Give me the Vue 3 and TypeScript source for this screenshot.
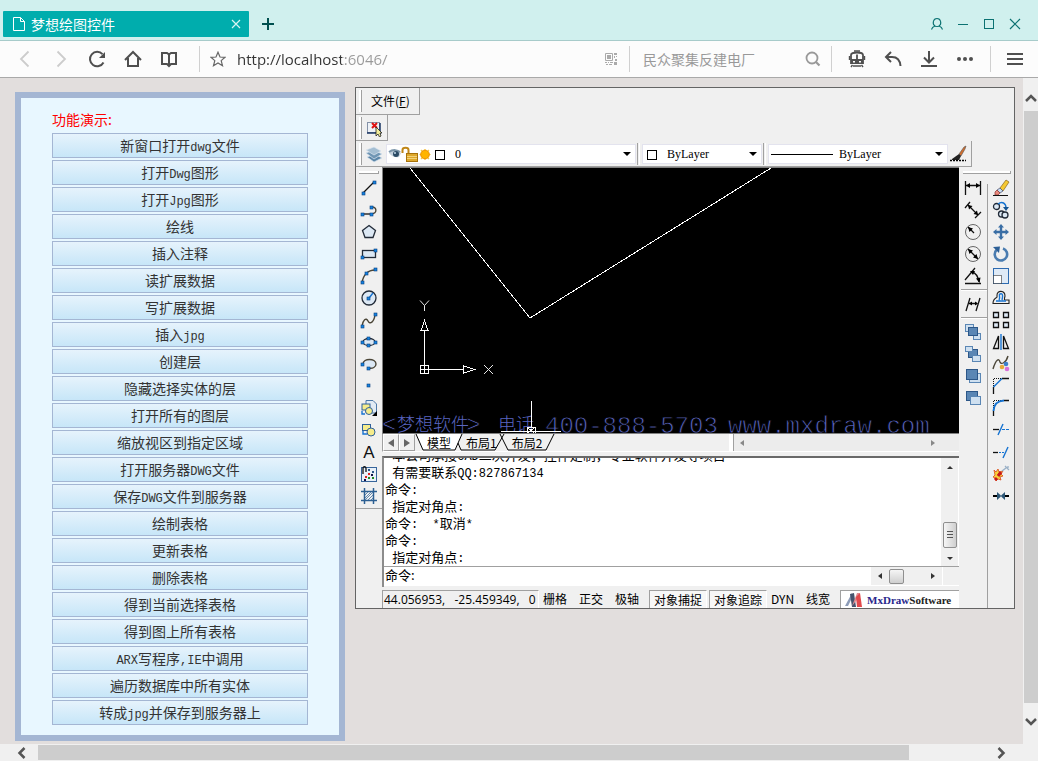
<script setup lang="ts">
import { ref } from 'vue'

interface Tool {
  label: string
  art: string
}

const url = ref('http://localhost:6046/')
const keyword = ref('')
const command = ref('命令:')

const actions: string[] = [
  '新窗口打开dwg文件', '打开Dwg图形', '打开Jpg图形', '绘线', '插入注释', '读扩展数据',
  '写扩展数据', '插入jpg', '创建层', '隐藏选择实体的层', '打开所有的图层', '缩放视区到指定区域',
  '打开服务器DWG文件', '保存DWG文件到服务器', '绘制表格', '更新表格', '删除表格',
  '得到当前选择表格', '得到图上所有表格', 'ARX写程序,IE中调用', '遍历数据库中所有实体',
  '转成jpg并保存到服务器上',
]

const history: string[] = [
  ' 本公司承接CAD二次开发，控件定制，专业软件开发等项目',
  ' 有需要联系QQ:827867134',
  '命令:',
  ' 指定对角点:',
  '命令:  *取消*',
  '命令:',
  ' 指定对角点:',
]

// Splits mixed text so that half-width runs can take their own face.
const runs = (text: string) =>
  (text.match(/[\x20-\x7e]+|[^\x20-\x7e]+/g) ?? []).map((part) => ({
    part,
    half: /^[\x20-\x7e]/.test(part),
  }))

const node = (x: number, y: number) =>
  `<rect x="${x - 1}" y="${y - 1}" width="3" height="3" fill="#1583e0" stroke="#0a3f7c" stroke-width=".6"/>`
const ink = 'fill="none" stroke="#111" stroke-width="1.3"'
const brown = 'fill="none" stroke="#4b4638" stroke-width="1.4"'
const pale = 'fill="#dce8f4" stroke="#222b38" stroke-width="1.3"'
const blue = 'fill="none" stroke="#1673d1" stroke-width="1.4"'
const steel = 'fill="#5a86b4" stroke="#2c5788" stroke-width="1"'
const glass = 'fill="#cfe0f0" stroke="#5a86b4" stroke-width="1"'

const drawTools: Tool[] = [
  { label: '直线', art: `<path d="M3 14L14 3" ${ink}/>${node(3, 14)}${node(14, 3)}` },
  { label: '多段线', art: `<path d="M2 13H11" ${ink}/><path d="M11 13C18 13 17 5 11 6" ${brown}/>${node(2, 13)}${node(11, 13)}${node(11, 6)}` },
  { label: '多边形', art: `<path d="M9 2.500L15.500 7.500L13 14.500H5L2.500 7.500Z" ${pale}/>` },
  { label: '矩形', art: `<rect x="2.500" y="5.500" width="13" height="7" ${pale}/>${node(2, 12)}${node(15, 5)}` },
  { label: '圆弧', art: `<path d="M2 16C3 8 8 3 15 3" ${brown}/>${node(2, 15)}${node(6, 6)}${node(15, 2)}` },
  { label: '圆', art: `<circle cx="9" cy="9" r="7" ${pale}/><path d="M9 9L13 4" ${blue}/>${node(8, 9)}` },
  { label: '样条曲线', art: `<path d="M2 15C3 9 6 6 8 10C10 14 14 11 15 4" ${brown}/>${node(2, 15)}${node(15, 3)}` },
  { label: '椭圆', art: `<ellipse cx="9" cy="9" rx="6" ry="3.500" ${pale}/>${node(2, 9)}${node(15, 9)}${node(8, 5)}${node(8, 12)}` },
  { label: '椭圆弧', art: `<path d="M3 9C3 3 16 3 16 9C16 12 13 14 8 13" fill="#dce8f4" stroke="#4b4638" stroke-width="1.400"/>${node(2, 9)}${node(8, 13)}` },
  { label: '点', art: node(8, 8) },
  { label: '创建块', art: `<path d="M6 1.500H13L16.500 5V14H6Z" fill="#e2ebf4" stroke="#4d79a8"/><rect x="2" y="5" width="8" height="6" fill="#f6ec8b" stroke="#2e609b"/><circle cx="9" cy="12" r="3.500" fill="#f6ec8b" stroke="#2e609b"/><path d="M2 12V15H5" ${blue}/><path d="M17 12V17H12Z" fill="#000"/>` },
  { label: '插入块', art: `<rect x="2.500" y="3.500" width="8" height="6" fill="#f6ec8b" stroke="#2e609b"/><circle cx="11" cy="11" r="4" fill="#f6ec8b" stroke="#2e609b"/><path d="M3 10V13H7" ${blue}/>` },
  { label: '文字', art: `<text x="9" y="15" font-family="Liberation Sans, sans-serif" font-size="17" text-anchor="middle" fill="#111">A</text>` },
  { label: '图案填充', art: `<rect x="1.500" y="2.500" width="15" height="14" fill="#e9f0f8" stroke="#37659b"/><path d="M3 9V3.500C3 1 6 1 6 3.500V7" ${ink}/><path d="M8 4h2v2h-2zM12 6h2v2h-2z" fill="#2c5788"/><path d="M5 11h2v2h-2zM8 8h2v2h-2z" fill="#d22"/><path d="M8 12h2v2h-2zM12 12h2v2h-2z" fill="#282"/><path d="M4 14h2v2h-2zM11 9h2v2h-2z" fill="#114"/>` },
  { label: '面域', art: `<path d="M4.500 1V17M13.500 1V17M1 4.500H17M1 13.500H17" fill="none" stroke="#2c5f92" stroke-width="1.500"/><path d="M5 8L8 5M5 11L11 5M5 13L13 5M8 13L13 8M11 13L13 11" stroke="#3f6f9f" stroke-width=".8"/>` },
]

const dimensionTools: Tool[] = [
  { label: '线性标注', art: `<path d="M1.500 2V16M16.500 2V16M2 6.500H16" ${ink}/><path d="M2 6.500L6 4V9ZM16 6.500L12 4V9Z"/>` },
  { label: '对齐标注', art: `<path d="M1 7L6 1M11 17L17 11M4 4L14 14" ${ink}/><path d="M4 4L8.500 5L5 8.500ZM14 14L13 9.500L9.500 13Z"/>` },
  { label: '半径标注', art: `<circle cx="9" cy="9" r="7.500" fill="none" stroke="#666"/><path d="M4 4L10 10" ${ink}/><path d="M4 4L9 5.500L5.500 9Z"/>` },
  { label: '直径标注', art: `<circle cx="9" cy="9" r="7.500" fill="none" stroke="#666"/><path d="M4 4L14 14" ${ink}/><path d="M4 4L9 5.500L5.500 9ZM14 14L9 12.500L12.500 9Z"/>` },
  { label: '角度标注', art: `<path d="M1 16.500H17M1 13L11 1M8 5C12 6 14 9 15 15" ${ink}/><path d="M15.500 16L12 11.500L16.500 10.500ZM6 4L11 4L9 8Z"/>` },
]
const obliqueTool: Tool = { label: '编辑标注', art: `<path d="M2 16L6 3M12 16L16 3M5 8.500H13" ${ink}/><path d="M5 8.500L8 6.500V10.500ZM14 8.500L11 6.500V10.500Z"/>` }
const orderTools: Tool[] = [
  { label: '前置', art: `<rect x="1.500" y="1.500" width="8" height="7" ${glass}/><rect x="9.500" y="10.500" width="7" height="6" ${glass}/><rect x="4.500" y="4.500" width="9" height="8" ${steel}/>` },
  { label: '后置', art: `<rect x="4.500" y="4.500" width="9" height="8" ${steel}/><rect x="1.500" y="1.500" width="7" height="5" ${glass}/><rect x="8.500" y="10.500" width="8" height="6" ${glass}/>` },
  { label: '置于对象之上', art: `<rect x="5.500" y="6.500" width="11" height="9" ${glass}/><rect x="2.500" y="2.500" width="11" height="10" ${steel}/>` },
  { label: '置于对象之下', art: `<rect x="2.500" y="2.500" width="11" height="9" ${steel}/><rect x="6.500" y="7.500" width="10" height="8" ${glass}/>` },
]

const modifyTools: Tool[] = [
  { label: '删除', art: `<path d="M8 9L14 1L17 3L11 12Z" fill="#f5c832" stroke="#86641c" stroke-width=".7"/><path d="M5 11L8 9L11 12L8 14Z" fill="#c6ddf0" stroke="#446" stroke-width=".7"/><path d="M3 13L5 11L8 14L6 16H3Z" fill="#e8897c" stroke="#833" stroke-width=".7"/><path d="M1 16.500H16" stroke="#111"/>` },
  { label: '复制', art: `<circle cx="4.500" cy="5.500" r="3" ${pale}/><circle cx="9.500" cy="13" r="3" ${pale}/><circle cx="13" cy="14" r="3" ${pale}/><path d="M6 3C10 0 14 2 14 7" ${blue}/><path d="M11 6H17L14 10Z" fill="#17548f"/>` },
  { label: '移动', art: `<path d="M9 1L12 4.500H10.200V7.800H13.500V6L17 9L13.500 12V10.200H10.200V13.500H12L9 17L6 13.500H7.800V10.200H4.500V12L1 9L4.500 6V7.800H7.800V4.500H6Z" fill="#3a6ea5"/>` },
  { label: '旋转', art: `<path d="M11 3.500A6.200 6.200 0 1 1 4.500 5" fill="none" stroke="#4a7cb0" stroke-width="2.600"/><path d="M1 2L8 1.500L7 8Z" fill="#2c5f96"/>` },
  { label: '缩放', art: `<rect x="1.500" y="1.500" width="15" height="15" fill="#dfeaf6" stroke="#2e6bb0"/><path d="M1.500 8.500H9.500V16.500H1.500Z" fill="#fff" stroke="#111" stroke-dasharray="1 1"/>` },
  { label: '偏移', art: `<path d="M1 14.500H17V11H13C12 11 12.500 9 13 7C13 1 5 1 5 6V8C5 9 1 9 1 14.500Z" fill="none" stroke="#222" stroke-width="1.100"/><path d="M4 12H14M7 11C9 8 6 6 8 5C11 4 11 7 10 11" ${blue}/>` },
  { label: '阵列', art: `<path d="M1.500 1.500h5v5h-5zM11.500 1.500h5v5h-5zM1.500 11.500h5v5h-5zM11.500 11.500h5v5h-5z" fill="#dfeaf6" stroke="#111" stroke-width="1.300"/>` },
  { label: '镜像', art: `<path d="M6.500 3V15.500H1.500ZM11.500 3V15.500H16.500Z" ${ink}/><path d="M9 1V17" ${blue}/>` },
  { label: '编辑样条', art: `<path d="M1 14C4 4 7 3 8 7C9 10 14 8 16 1" ${brown}/><circle cx="10" cy="12" r="2.300" fill="#e6aa39"/><circle cx="14" cy="9" r="2.300" fill="#3c80cc"/><circle cx="15" cy="14" r="2.300" fill="#d970d8"/>` },
  { label: '倒角', art: `<path d="M1.500 9V1.500H9" fill="none" stroke="#111" stroke-dasharray="1 1"/><path d="M1.500 17V10M10 1.500H17" ${ink}/><path d="M1.500 10L10 1.500" ${blue}/>` },
  { label: '圆角', art: `<path d="M1.500 9V1.500H9" fill="none" stroke="#111" stroke-dasharray="1 1"/><path d="M1.500 17V12M12 1.500H17" ${ink}/><path d="M1.500 12C2 5 5 2 12 1.500" fill="none" stroke="#1673d1" stroke-width="2"/>` },
  { label: '修剪', art: `<path d="M1 8.500H7" ${ink}/><path d="M6 14L11 3" ${blue}/><path d="M10 8.500H17" fill="none" stroke="#1673d1" stroke-width="1.200" stroke-dasharray="3 1"/>` },
  { label: '延伸', art: `<path d="M1 9.500H6" ${ink}/><path d="M11 15L16 4" ${blue}/><path d="M7 9.500H13" fill="none" stroke="#1673d1" stroke-width="1.200" stroke-dasharray="2 1"/>` },
  { label: '分解', art: `<path d="M2 5L4 7L6 4L7 7L11 6L9 9L11 11L8 12L9 15L6 14L4 16L3 13L1 12L3 10Z" fill="#f7d23a" stroke="#d9481c" stroke-width=".8"/><path d="M3 15L5 13M6 11L9 7" stroke="#c81818" stroke-width="3"/><path d="M10 6L14 3M13 1L17 5M16 1V3" stroke="#9ab0c6" stroke-width="1.300"/>` },
  { label: '打断', art: `<path d="M1 9H6M12 9H17" stroke="#000" stroke-width="2"/><path d="M5 5L9.500 9L5 13ZM13 5L8.500 9L13 13Z" fill="#2d5777"/>` },
]
</script>

<template>
  <div class="browser">
    <header class="titlebar">
      <div class="tab">
        <svg width="12" height="16" viewBox="0 0 12 16"><path d="M.5 1.500H7.500L11.500 5.500V14.500H.5ZM7.500 1.500V5.500H11.500" fill="none" stroke="#fff" /></svg>
        <span class="tab-name">梦想绘图控件</span>
        <button class="plain tab-close" aria-label="关闭标签">
          <svg width="10" height="10" viewBox="0 0 10 10"><path d="M1 1L9 9M9 1L1 9" stroke="#d9f4f3" stroke-width="1.200" /></svg>
        </button>
      </div>
      <button class="plain new-tab" aria-label="新标签">
        <svg width="12" height="12" viewBox="0 0 12 12"><path d="M6 0V12M0 6H12" stroke="#00504f" stroke-width="2" /></svg>
      </button>
      <div class="window-buttons">
        <button class="plain" aria-label="用户"><svg width="14" height="14" viewBox="0 0 14 14"><path d="M1.500 12.500C2 10.500 3.500 9.500 5 9C7 10 7 10 9 9C10.500 9.500 12 10.500 12.500 12.500M5 9C2 7 3 1.500 7 1.500S12 7 9 9" fill="none" stroke="#0b7272" stroke-width="1.100" /></svg></button>
        <button class="plain" aria-label="最小化"><svg width="12" height="12" viewBox="0 0 12 12"><path d="M1 6.500H11" stroke="#0b7272" /></svg></button>
        <button class="plain" aria-label="最大化"><svg width="12" height="12" viewBox="0 0 12 12"><rect x="1.500" y="1.500" width="9" height="9" fill="none" stroke="#0b7272" /></svg></button>
        <button class="plain" aria-label="关闭"><svg width="12" height="12" viewBox="0 0 12 12"><path d="M1 1L11 11M11 1L1 11" stroke="#0b7272" stroke-width="1.200" /></svg></button>
      </div>
    </header>

    <nav class="navbar">
      <button class="plain nav-button" aria-label="后退"><svg width="18" height="18" viewBox="0 0 18 18"><path d="M12.500 1.500L5 9L12.500 16.500" fill="none" stroke="#ccc" stroke-width="1.800" /></svg></button>
      <button class="plain nav-button" aria-label="前进"><svg width="18" height="18" viewBox="0 0 18 18"><path d="M5.500 1.500L13 9L5.500 16.500" fill="none" stroke="#ccc" stroke-width="1.800" /></svg></button>
      <button class="plain nav-button" aria-label="刷新"><svg width="18" height="18" viewBox="0 0 18 18"><path d="M15.500 12.500A7.200 7.200 0 1 1 14.500 4.200" fill="none" stroke="#4f4f4f" stroke-width="2" /><path d="M17 2V8H11Z" fill="#4f4f4f" /></svg></button>
      <button class="plain nav-button" aria-label="主页"><svg width="18" height="18" viewBox="0 0 18 18"><path d="M1 10L9 2L17 10M4 8V16H14V8" fill="none" stroke="#4f4f4f" stroke-width="2" /></svg></button>
      <button class="plain nav-button" aria-label="书签"><svg width="18" height="18" viewBox="0 0 18 18"><path d="M2 3H7L9 4.500L11 3H16V14H11L9 16L7 14H2ZM9 4V15" fill="none" stroke="#4f4f4f" stroke-width="2" /></svg></button>
      <div class="address">
        <button class="plain star" aria-label="收藏"><svg width="16" height="16" viewBox="0 0 16 16"><path d="M8 1.200L10 6L15 6.300L11.200 9.600L12.500 14.700L8 12L3.500 14.700L4.800 9.600L1 6.300L6 6Z" fill="none" stroke="#666" stroke-width="1.200" /></svg></button>
        <input v-model="url" class="url" type="text" aria-label="网址" />
        <button class="plain qr" aria-label="二维码"><svg width="12" height="12" viewBox="0 0 12 12"><path d="M.5 .5H7.500V7.500H.5Z" fill="none" stroke="#aaa" /><path d="M2 2h4v4H2zM9 0h3v2H9zM9 3h1v2H9zM11 3h1v1h-1zM10 6h2v2h-2zM0 9h2v1H0zM3 9h1v1H3zM5 9h3v1H5zM1 11h2v1H1zM4 11h3v1H4zM9 9h3v3H9z" fill="#aaa" /></svg></button>
      </div>
      <div class="search">
        <input v-model="keyword" type="text" placeholder="民众聚集反建电厂" aria-label="搜索" />
        <button class="plain" aria-label="搜索按钮"><svg width="16" height="16" viewBox="0 0 16 16"><circle cx="7" cy="7" r="5.500" fill="none" stroke="#999" stroke-width="1.800" /><path d="M11 11L14.500 14.500" stroke="#999" stroke-width="2.200" /></svg></button>
      </div>
      <div class="extras">
        <button class="plain nav-button" aria-label="抢票"><svg width="18" height="18" viewBox="0 0 18 18"><path d="M3 13V5C3 3 5 2.500 9 2.500S15 3 15 5V13ZM9 4.500V9" fill="none" stroke="#4f4f4f" stroke-width="1.800" /><path d="M1.500 6V10M16.500 6V10M6 1H12M4.500 15L3 17M13.500 15L15 17M5 16H13" fill="none" stroke="#4f4f4f" stroke-width="1.400" /><path d="M3 9H15V14H3Z" fill="#4f4f4f" /><path d="M5 11h2v1.500H5zM11 11h2v1.500h-2z" fill="#fff" /></svg></button>
        <button class="plain nav-button" aria-label="撤销关闭"><svg width="18" height="18" viewBox="0 0 18 18"><path d="M7 2L2 7L7 12M2 7H8C13 7 16 10 16.500 16" fill="none" stroke="#4f4f4f" stroke-width="2" /></svg></button>
        <button class="plain nav-button" aria-label="下载"><svg width="18" height="18" viewBox="0 0 18 18"><path d="M9 1V12M4 7.500L9 12.500L14 7.500M1 16H17" fill="none" stroke="#4f4f4f" stroke-width="2" /></svg></button>
        <button class="plain nav-button" aria-label="更多"><svg width="18" height="18" viewBox="0 0 18 18"><g fill="#4f4f4f"><circle cx="3" cy="9" r="2" /><circle cx="9" cy="9" r="2" /><circle cx="15" cy="9" r="2" /></g></svg></button>
      </div>
      <button class="plain menu-button" aria-label="菜单"><svg width="16" height="14" viewBox="0 0 16 14"><path d="M0 2H16M0 7H16M0 12H16" stroke="#4f4f4f" stroke-width="2" /></svg></button>
    </nav>

    <div class="viewport">
      <main class="page">
        <section class="panel">
          <h1>功能演示:</h1>
          <button v-for="action in actions" :key="action" class="action">
            <span v-for="(run, i) in runs(action)" :key="i" :class="{ half: run.half }">{{ run.part }}</span>
          </button>
        </section>

        <section class="cad">
          <div class="bar menu-bar">
            <i class="grip"></i>
            <button class="plain menu-item">文件(<u>F</u>)</button>
          </div>
          <div class="bar select-bar">
            <i class="grip"></i>
            <button class="plain tool" aria-label="选择">
              <svg width="18" height="18" viewBox="0 0 18 18"><rect x="2.500" y="3.500" width="12" height="10" fill="#eef2f7" stroke="#8592a8" /><path d="M15 4V14H2" fill="none" stroke="#183563" stroke-width="1.500" /><path d="M7 4L12 9M12 4L7 9" stroke="#e01212" stroke-width="2" /><path d="M11 8V17L13 15L14.500 18L16 17L15 14H17Z" fill="#f2ed9a" stroke="#222" stroke-width=".8" /></svg>
            </button>
          </div>
          <div class="bar layer-bar">
            <i class="grip"></i>
            <button class="plain tool" aria-label="图层特性">
              <svg width="18" height="18" viewBox="0 0 18 18"><path d="M2 12L10 9L17 13L9 17Z" fill="#5b86a8" stroke="#dce7f0" stroke-width=".7" /><path d="M1 8L9 5L17 9L9 14Z" fill="#7096b4" stroke="#dce7f0" stroke-width=".7" /><path d="M1 5L9 2L16 6L9 10Z" fill="#a4bed2" stroke="#dce7f0" stroke-width=".7" /></svg>
            </button>
            <div class="combo layer-combo">
              <svg width="60" height="16" viewBox="0 0 60 16">
                <path d="M1 7C4 3 10 4 13 7L11 11C8 12 4 11 1 7Z" fill="#c3d0dc" /><path d="M1 6C5 3 10 4 12 6" fill="none" stroke="#7b95a9" stroke-width="2" /><circle cx="8" cy="8" r="3" fill="#2a4a64" /><circle cx="7" cy="7" r="1" fill="#c2d9e8" />
                <path d="M14.500 7V4C14.500 1 20.500 1 20.500 4V8" fill="none" stroke="#c08617" stroke-width="2" /><rect x="18.500" y="7.500" width="11" height="8" fill="#dda82c" stroke="#a7720b" /><path d="M19 10.500H29M19 12.500H29" stroke="#f3d37b" />
                <path d="M37 3V14M31.500 8.500H42.500M33 4L41 13M41 4L33 13" stroke="#f6c93c" stroke-width="1.200" /><circle cx="37" cy="8.500" r="4.300" fill="#ffb400" stroke="#ee8d00" />
                <rect x="47.500" y="4.500" width="9" height="9" fill="#fff" stroke="#000" />
              </svg>
              <select aria-label="图层"><option>0</option></select>
              <svg class="arrow" width="8" height="4" viewBox="0 0 8 4"><path d="M0 0H8L4 4Z" /></svg>
            </div>
            <i class="divider"></i>
            <div class="combo color-combo">
              <svg width="16" height="16" viewBox="0 0 16 16"><rect x=".5" y="4.500" width="9" height="9" fill="#fff" stroke="#000" /></svg>
              <select aria-label="颜色"><option>ByLayer</option></select>
              <svg class="arrow" width="8" height="4" viewBox="0 0 8 4"><path d="M0 0H8L4 4Z" /></svg>
            </div>
            <i class="divider"></i>
            <div class="combo line-combo">
              <svg width="64" height="16" viewBox="0 0 64 16"><path d="M0 8.500H62" stroke="#000" /></svg>
              <select aria-label="线型"><option>ByLayer</option></select>
              <svg class="arrow" width="8" height="4" viewBox="0 0 8 4"><path d="M0 0H8L4 4Z" /></svg>
            </div>
            <button class="plain tool" aria-label="特性匹配">
              <svg width="18" height="18" viewBox="0 0 18 18"><path d="M10 9L15 2L17 1L16 4L12 11Z" fill="#cf6d2d" stroke="#555" stroke-width=".6" /><path d="M3 14L10 9L12 11L10 15H3Z" fill="#222" /><path d="M1 15.500H17" stroke="#000" stroke-width="1.500" stroke-dasharray="2 1" /></svg>
            </button>
          </div>

          <div class="workbench">
            <div class="side draw-side">
              <i class="grip-flat"></i>
              <button v-for="tool in drawTools" :key="tool.label" class="plain tool" :aria-label="tool.label">
                <svg width="18" height="18" viewBox="0 0 18 18" v-html="tool.art"></svg>
              </button>
            </div>

            <div class="center">
              <div class="drawing">
                <svg class="scene" width="577" height="265" viewBox="0 0 577 265">
                  <g fill="none" stroke="#fff" shape-rendering="crispEdges">
                    <path d="M27 0L147 150L388 0" />
                    <path d="M41.500 205V162M38 201.500H80M37.500 197.500h8v8h-8zM38 162.500L41.500 152.500L45 162.500ZM80.500 198L91.500 201.500L80.500 205Z" />
                  </g>
                  <path d="M37 132.500L41.500 137.500L46 132.500M41.500 137.500V143M101 197L110 206M110 197L101 206" fill="none" stroke="#e8e8e8" />
                  <g class="watermark">
                    <text x="-1" y="264">&lt;</text>
                    <text class="han" x="14" y="263">梦想软件</text>
                    <text x="83" y="264">&gt;</text>
                    <text class="han" x="115" y="263">电话</text>
                    <text x="162" y="265">400-888-5703</text>
                    <text x="345" y="265">www.mxdraw.com</text>
                  </g>
                  <g fill="none" stroke="#fff" shape-rendering="crispEdges">
                    <path d="M148.500 233V259M118 263.500H178" />
                    <path d="M144.500 259.500h8v6h-8zM145 260l6 5M151 260l-6 5" />
                  </g>
                </svg>
              </div>
              <div class="sheet-row">
                <button class="plain sheet-nav" aria-label="上一布局"><svg width="6" height="8" viewBox="0 0 6 8"><path d="M6 0V8L0 4Z" fill="#666" /></svg></button>
                <button class="plain sheet-nav" aria-label="下一布局"><svg width="6" height="8" viewBox="0 0 6 8"><path d="M0 0V8L6 4Z" fill="#666" /></svg></button>
                <div class="sheets">
                  <svg class="sheet-edges" width="140" height="17" viewBox="0 0 140 17">
                    <path d="M1 0L8 16H40L47 0Z" fill="#fff" />
                    <path d="M1 0L8 16H40L47 0M43 9L46 16H80L89 0M85 0L93 16H131L139 0" fill="none" stroke="#000" />
                  </svg>
                  <button class="plain sheet">模型</button>
                  <button class="plain sheet">布局1</button>
                  <button class="plain sheet">布局2</button>
                </div>
                <div class="sheet-scroll">
                  <svg width="4" height="6" viewBox="0 0 4 6"><path d="M4 0V6L0 3Z" fill="#888" /></svg>
                  <svg width="4" height="6" viewBox="0 0 4 6"><path d="M0 0V6L4 3Z" fill="#888" /></svg>
                </div>
              </div>
              <div class="console">
                <div class="log">
                  <div class="lines">
                    <p v-for="(line, i) in history" :key="i"><span v-for="(run, j) in runs(line)" :key="j" :class="{ half: run.half }">{{ run.part }}</span></p>
                  </div>
                  <div class="log-scroll">
                    <svg width="6" height="3" viewBox="0 0 6 3"><path d="M0 3H6L3 0Z" fill="#333" /></svg>
                    <div class="log-thumb"><svg width="6" height="8" viewBox="0 0 6 8"><path d="M0 .5H6M0 3.500H6M0 6.500H6" stroke="#555" /></svg></div>
                    <svg width="6" height="3" viewBox="0 0 6 3"><path d="M0 0H6L3 3Z" fill="#333" /></svg>
                  </div>
                </div>
                <div class="prompt">
                  <input v-model="command" type="text" aria-label="命令行" />
                  <div class="prompt-scroll">
                    <svg width="4" height="6" viewBox="0 0 4 6"><path d="M4 0V6L0 3Z" fill="#333" /></svg>
                    <i></i>
                    <svg width="4" height="6" viewBox="0 0 4 6"><path d="M0 0V6L4 3Z" fill="#333" /></svg>
                  </div>
                  <div class="prompt-corner"></div>
                </div>
              </div>
              <footer class="status">
                <output class="coords">44.056953,&nbsp;&nbsp; -25.459349,&nbsp;&nbsp; 0</output>
                <button class="plain mode">栅格</button>
                <button class="plain mode">正交</button>
                <button class="plain mode">极轴</button>
                <button class="plain mode pressed snap">对象捕捉</button>
                <button class="plain mode pressed">对象追踪</button>
                <button class="plain mode dyn">DYN</button>
                <button class="plain mode">线宽</button>
                <div class="brand">
                  <svg width="18" height="16" viewBox="0 0 18 16"><path d="M0 14L7 1L6 8L3 14Z" fill="#8d9cb8" /><path d="M5 2L9 1L11 15H7Z" fill="#46546e" /><path d="M7 14L12 1H15L11 9Z" fill="#e08a90" /><path d="M11 5L15 1L17 15H12Z" fill="#e2494c" /></svg>
                  <span><b>MxDraw</b>Software</span>
                </div>
              </footer>
            </div>

            <div class="side right-side">
              <i class="grip-flat"></i>
              <div class="columns">
                <div class="column">
                  <button v-for="tool in dimensionTools" :key="tool.label" class="plain tool" :aria-label="tool.label"><svg width="18" height="18" viewBox="0 0 18 18" v-html="tool.art"></svg></button>
                  <hr />
                  <button class="plain tool" :aria-label="obliqueTool.label"><svg width="18" height="18" viewBox="0 0 18 18" v-html="obliqueTool.art"></svg></button>
                  <hr />
                  <button v-for="tool in orderTools" :key="tool.label" class="plain tool" :aria-label="tool.label"><svg width="18" height="18" viewBox="0 0 18 18" v-html="tool.art"></svg></button>
                </div>
                <div class="column modify">
                  <button v-for="tool in modifyTools" :key="tool.label" class="plain tool" :aria-label="tool.label"><svg width="18" height="18" viewBox="0 0 18 18" v-html="tool.art"></svg></button>
                </div>
              </div>
            </div>
          </div>
        </section>
      </main>
      <div class="v-scroll">
        <svg width="12" height="8" viewBox="0 0 12 8"><path d="M1 7L6 2L11 7" fill="none" stroke="#555" stroke-width="2.500" /></svg>
        <i></i>
        <svg width="12" height="8" viewBox="0 0 12 8"><path d="M1 1L6 6L11 1" fill="none" stroke="#555" stroke-width="2.500" /></svg>
      </div>
    </div>
    <div class="h-scroll">
      <svg width="9" height="12" viewBox="0 0 9 12"><path d="M7.500 1L2.500 6L7.500 11" fill="none" stroke="#555" stroke-width="2.500" /></svg>
      <div class="h-track"><i></i></div>
      <svg width="9" height="12" viewBox="0 0 9 12"><path d="M1.500 1L6.500 6L1.500 11" fill="none" stroke="#555" stroke-width="2.500" /></svg>
    </div>
  </div>
</template>

<style>
body {
  margin: 0;
}
</style>

<style scoped>
.browser,
.browser * {
  box-sizing: border-box;
}
.browser {
  display: flex;
  flex-direction: column;
  height: 100vh;
  overflow: hidden;
  background: #e2dedd;
  color: #000;
  font: 12px/16px "Noto Sans CJK SC", sans-serif;
}
svg {
  display: block;
  flex: none;
}
.plain {
  display: flex;
  align-items: center;
  justify-content: center;
  flex: none;
  margin: 0;
  padding: 0;
  border: 0;
  background: none;
  color: inherit;
  font: inherit;
  white-space: nowrap;
}
input,
select {
  min-width: 0;
  margin: 0;
  padding: 0;
  border: 0;
  outline: 0;
  background: none;
  color: inherit;
  font: inherit;
}

/* Window frame */
.titlebar {
  display: flex;
  align-items: center;
  flex: none;
  height: 41px;
  padding: 7px 10px 0 3px;
  border-bottom: 1px solid #a7cbca;
  background: #d0f0ee;
}
.tab {
  display: flex;
  align-items: center;
  gap: 6px;
  width: 246px;
  height: 26px;
  padding: 0 8px 0 10px;
  border-radius: 1px;
  background: #00adad;
  color: #fff;
}
.tab-name {
  flex: 1;
  font-size: 14px;
  line-height: 20px;
}
.new-tab {
  width: 38px;
  height: 26px;
}
.window-buttons {
  display: flex;
  margin-left: auto;
}
.window-buttons button {
  width: 26px;
  height: 26px;
}

/* Address bar */
.navbar {
  display: flex;
  align-items: center;
  flex: none;
  height: 37px;
  padding: 0 5px 0 7px;
  border-bottom: 1px solid #a9a9a9;
  background: #fcfcfc;
}
.nav-button {
  width: 36px;
  height: 26px;
}
.address,
.search,
.extras,
.menu-button {
  display: flex;
  align-items: center;
  height: 26px;
  border-left: 1px solid #d0d0d0;
}
.address {
  flex: 1;
  gap: 11px;
  margin-left: 12px;
  padding: 0 12px 0 10px;
}
.url {
  flex: 1;
  height: 24px;
  background: linear-gradient(90deg, #333 105px, #999 105px);
  background-clip: text;
  -webkit-text-fill-color: transparent;
  font: 15px/24px "Open Sans", "Noto Sans", sans-serif;
}
.search {
  width: 202px;
  padding: 0 10px 0 13px;
}
.search input {
  flex: 1;
  height: 24px;
  font-size: 14px;
}
.search input::placeholder {
  color: #999;
  opacity: 1;
}
.extras {
  padding: 0 7px;
}
.menu-button {
  width: 43px;
  padding-left: 5px;
}

/* Page */
.viewport {
  display: flex;
  flex: 1;
  min-height: 0;
}
.page {
  display: flex;
  align-items: flex-start;
  flex: 1;
  gap: 10px;
  min-width: 0;
  padding: 9px 8px 0 15px;
  overflow: hidden;
}
.panel {
  display: flex;
  flex-direction: column;
  flex: none;
  gap: 2px;
  width: 330px;
  margin-top: 5px;
  padding: 11px 31px 10px;
  border: 6px solid #a4b6d3;
  background: #e8f7ff;
  font-size: 14px;
}
.panel h1 {
  margin: 0 0 1px;
  color: #f00;
  font-size: 14px;
  font-weight: 400;
  line-height: 21px;
}
.action {
  height: 25px;
  padding: 0;
  border: 1px solid #a4b6d3;
  background: linear-gradient(#e6f3fc, #c7e6f8);
  color: #333;
  font: 14px/23px "Noto Sans CJK SC", sans-serif;
}
.half {
  font-family: "Liberation Mono", monospace;
  font-size: 12px;
}

/* Drawing control */
.cad {
  display: flex;
  flex-direction: column;
  flex: 1;
  min-width: 0;
  border: 1px solid #646464;
  background: #f0f0f0;
}
.bar {
  display: flex;
  align-items: center;
  align-self: flex-start;
  height: 26px;
  border-right: 1px solid #a0a0a0;
  border-bottom: 1px solid #a0a0a0;
}
.grip {
  width: 3px;
  height: 22px;
  margin: 0 2px 0 3px;
  border: solid #a0a0a0;
  border-width: 0 1px 0 0;
  background: #fff;
}
.menu-bar {
  height: 27px;
}
.menu-item {
  padding: 0 9px 0 7px;
}
.tool {
  width: 20px;
  height: 22px;
}
.select-bar {
  padding-right: 3px;
}
.layer-bar {
  padding-right: 3px;
}
.combo {
  display: flex;
  align-items: center;
  height: 20px;
  margin-left: 2px;
  padding: 0 4px;
  border: 1px solid #e3e3ee;
  background: #fff;
  font-family: "Liberation Serif", serif;
}
.combo select {
  flex: 1;
  height: 16px;
  appearance: none;
}
.layer-combo {
  width: 250px;
  gap: 7px;
  padding-left: 1px;
}
.color-combo {
  width: 120px;
  gap: 4px;
}
.line-combo {
  width: 180px;
  gap: 4px;
  padding-left: 2px;
}
.divider {
  width: 3px;
  height: 22px;
  margin-left: 1px;
  border-right: 1px solid #fff;
  border-left: 1px solid #a0a0a0;
}
.workbench {
  display: flex;
}
.side {
  flex: none;
}
.draw-side {
  align-self: flex-start;
  width: 26px;
  padding: 4px 3px 1px;
  border-bottom: 1px solid #a0a0a0;
}
.grip-flat {
  display: block;
  height: 3px;
  margin-bottom: 3px;
  border-right: 1px solid #a0a0a0;
  border-bottom: 1px solid #a0a0a0;
  background: #fff;
}
.center {
  display: flex;
  flex-direction: column;
  flex: 1;
  min-width: 0;
}
.drawing {
  height: 267px;
  overflow: hidden;
  border: 1px solid #808080;
  border-right: 0;
  background: #000;
}
.watermark {
  fill: #5a65c0;
  stroke: #000;
  stroke-width: 0.8px;
  font: 24px "Liberation Mono", monospace;
}
.han {
  stroke: none;
  font: 300 18px "Noto Sans CJK SC", sans-serif;
}
.sheet-row {
  display: flex;
  height: 18px;
  border-left: 1px solid #a0a0a0;
  border-bottom: 1px solid #fff;
}
.sheet-nav {
  width: 16px;
  border: 1px solid #a0a0a0;
  border-left-color: #fff;
  border-top-color: #fff;
}
.sheets {
  position: relative;
  display: flex;
  flex: 1;
  gap: 15px;
  padding-left: 12px;
}
.sheet-edges {
  position: absolute;
  top: 0;
  left: 0;
}
.sheet {
  position: relative;
}
.sheet-scroll {
  display: flex;
  align-items: center;
  justify-content: space-between;
  width: 230px;
  padding: 0 24px 0 7px;
  border-left: 4px solid #fff;
  box-shadow: inset 1px 0 #a0a0a0;
  background: #ececec;
}
.console {
  margin-top: 4px;
  border-top: 2px solid #696969;
  border-left: 2px solid #8c8c8c;
  background: #fff;
  font-size: 13px;
}
.log {
  display: flex;
  height: 109px;
  padding-right: 1px;
  border-bottom: 1px solid #a0a0a0;
}
.lines {
  display: flex;
  flex-direction: column;
  justify-content: flex-end;
  flex: 1;
  min-width: 0;
  padding: 0 0 1px 1px;
  overflow: hidden;
}
.lines p {
  flex: none;
  height: 17px;
  margin: 0;
  line-height: 17px;
  white-space: pre;
}
.log-scroll {
  display: flex;
  flex-direction: column;
  align-items: center;
  width: 17px;
  padding: 8px 0 6px;
  background: #f0f0f0;
}
.log-thumb {
  display: flex;
  align-items: center;
  justify-content: center;
  width: 14px;
  height: 26px;
  margin: auto 0 9px;
  border: 1px solid #8f8f8f;
  border-radius: 2px;
  background: linear-gradient(90deg, #f5f5f5, #cfcfcf);
}
.prompt {
  display: flex;
  height: 20px;
  padding: 0 0 1px 1px;
  border-bottom: 1px solid #f0f0f0;
}
.prompt input {
  flex: 1;
  height: 16px;
  line-height: 16px;
}
.prompt-scroll {
  display: flex;
  align-items: center;
  width: 71px;
  padding: 0 7px;
  background: #f0f0f0;
}
.prompt-corner {
  width: 17px;
  border-left: 1px solid #fff;
  background: #f0f0f0;
}
.prompt-scroll i {
  width: 15px;
  height: 15px;
  margin: 0 auto 0 7px;
  border: 1px solid #8f8f8f;
  border-radius: 2px;
  background: linear-gradient(#f5f5f5, #cfcfcf);
}
.status {
  display: flex;
  height: 21px;
  padding-top: 3px;
}
.coords {
  flex: none;
  width: 157px;
  overflow: hidden;
  padding-left: 1px;
  border-top: 1px solid #a0a0a0;
  border-left: 1px solid #a0a0a0;
  border-right: 1px solid #fff;
  font-family: "Open Sans", "Noto Sans", sans-serif;
  line-height: 17px;
  white-space: nowrap;
}
.mode {
  padding: 0 6px;
  border: 0;
}
.coords + .mode,
.dyn {
  padding-left: 4px;
}
.pressed {
  width: 58px;
  margin-left: 2px;
  padding: 0 1px;
  border-top: 1px solid #a0a0a0;
  border-left: 1px solid #a0a0a0;
  border-right: 1px solid #fff;
  background: #f7f7f7;
}
.snap {
  margin-left: 4px;
}
.brand {
  display: flex;
  align-items: center;
  flex: 1;
  gap: 4px;
  min-width: 0;
  margin-left: 4px;
  padding-left: 4px;
  border-top: 1px solid #a0a0a0;
  border-left: 1px solid #a0a0a0;
  background: #fff;
  color: #222;
  font: bold 11px/16px "Liberation Serif", serif;
}
.brand b {
  color: #28288c;
}
.right-side {
  width: 55px;
  padding: 4px 3px 0 4px;
}
.columns {
  display: flex;
}
.column {
  width: 24px;
}
.column hr {
  height: 2px;
  margin: 2px 0 2px -2px;
  border: 0;
  border-top: 1px solid #a0a0a0;
  background: #fff;
}
.modify {
  margin-top: 7px;
  height: 424px;
  border-left: 1px solid #a0a0a0;
}
.modify .tool {
  margin-left: 3px;
}
.modify .tool:first-child {
  margin-top: -7px;
}

/* Page scrollbars */
.v-scroll {
  display: flex;
  flex-direction: column;
  align-items: center;
  gap: 9px;
  width: 15px;
  padding: 16px 0 18px;
  background: #f0f0f0;
}
.v-scroll i {
  flex: 1;
  align-self: stretch;
  margin: 0 0 6px 1px;
  background: #cdcdcd;
}
.h-scroll {
  display: flex;
  align-items: center;
  flex: none;
  gap: 12px;
  height: 17px;
  padding: 0 32px 0 17px;
  background: #f0f0f0;
}
.h-track {
  flex: 1;
  height: 15px;
}
.h-track i {
  display: block;
  width: 92%;
  height: 100%;
  background: #cdcdcd;
}
</style>
